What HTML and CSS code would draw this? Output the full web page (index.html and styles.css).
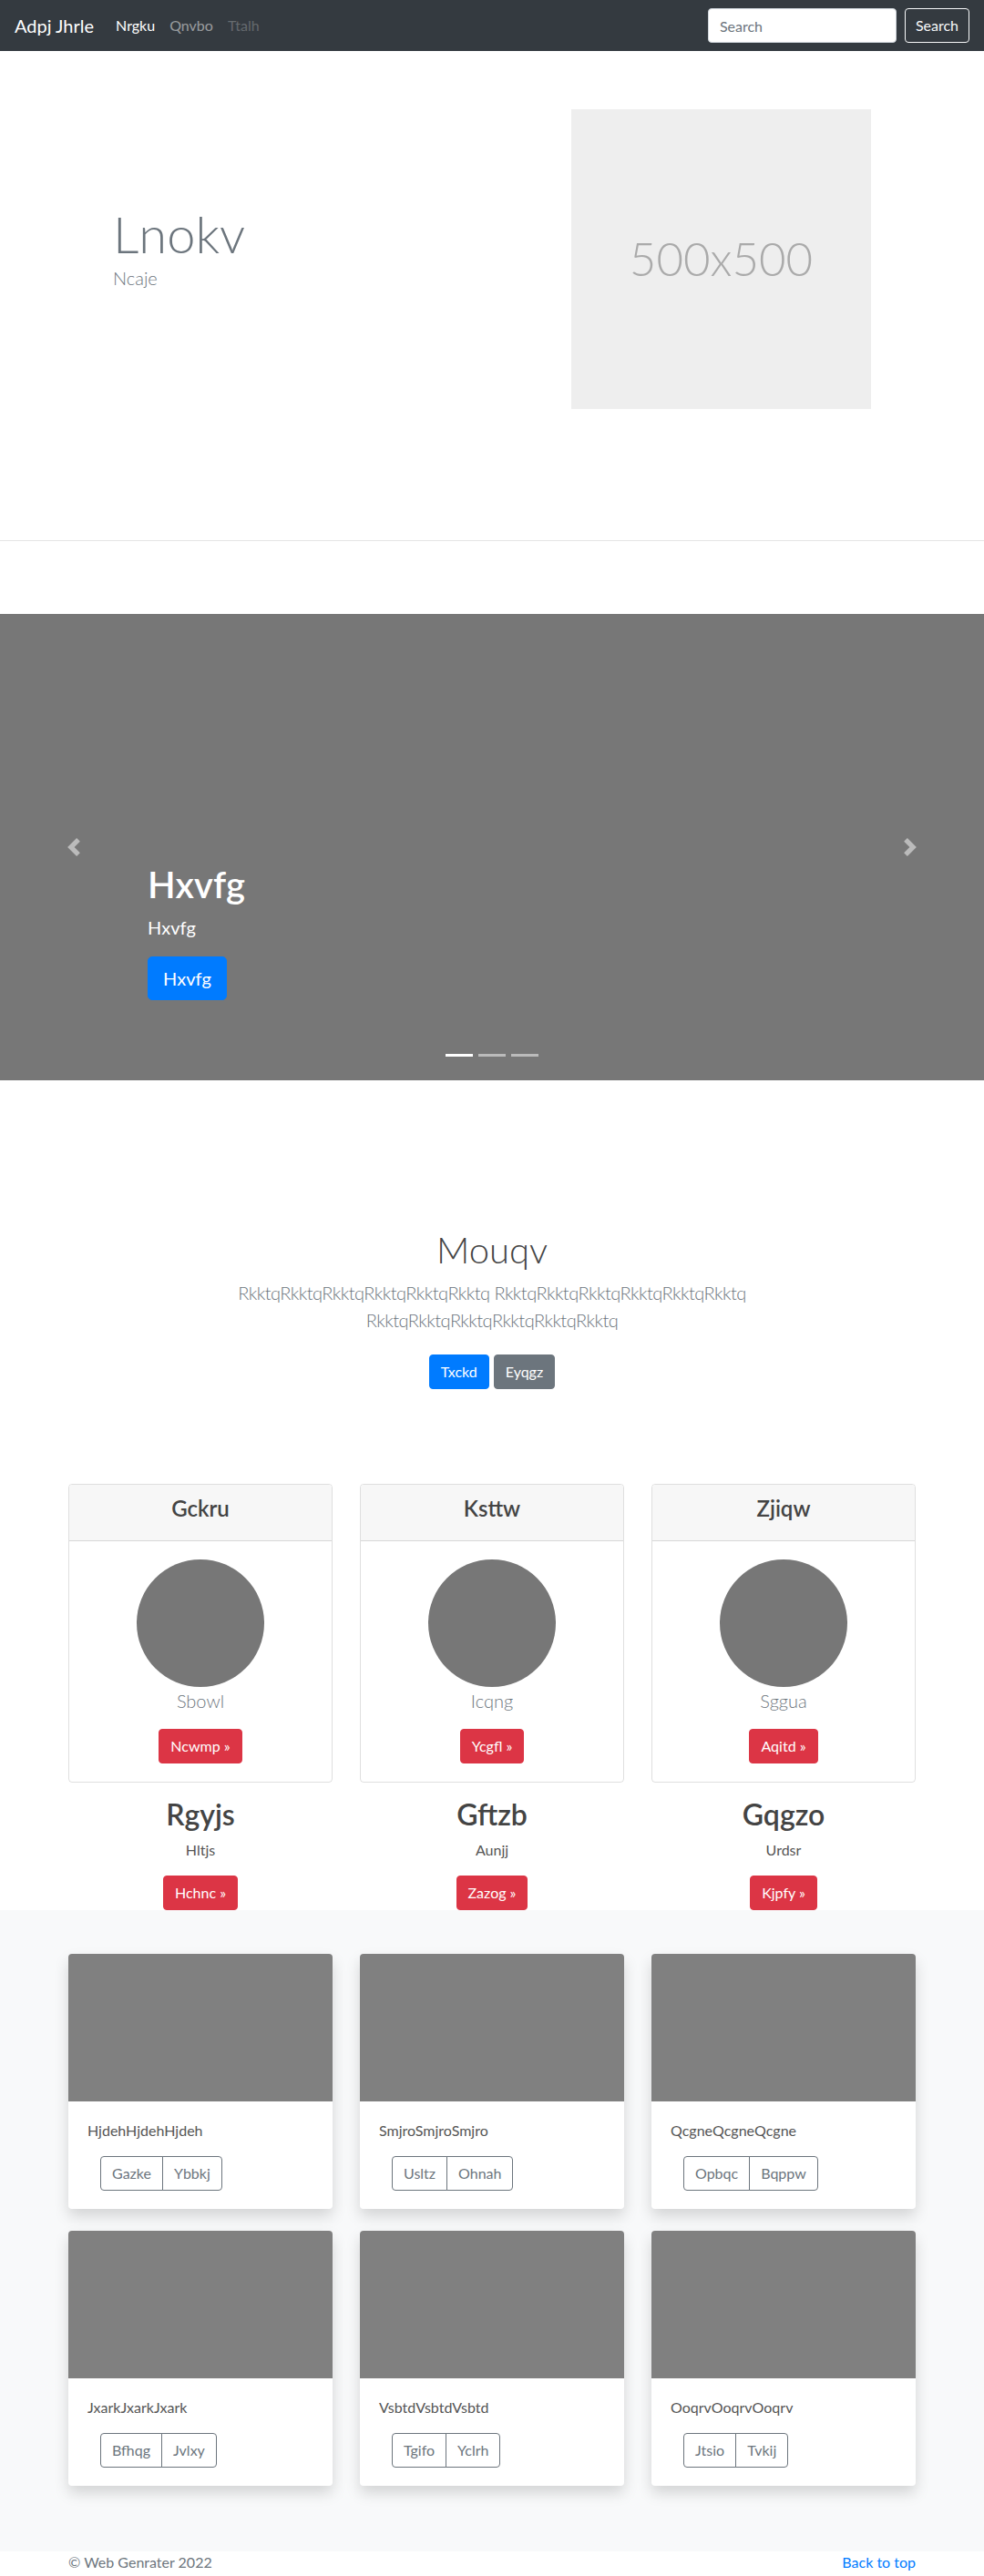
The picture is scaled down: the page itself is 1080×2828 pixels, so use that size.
FILE: index.html
```html
<!DOCTYPE html>
<html lang="en">
<head>
<meta charset="utf-8">
<title>Adpj Jhrle</title>
<link rel="stylesheet" href="styles.css">
</head>
<body>
<nav class="navbar">
  <a class="brand" href="#">Adpj Jhrle</a>
  <ul class="nav">
    <li class="active"><a href="#">Nrgku</a></li>
    <li><a href="#">Qnvbo</a></li>
    <li class="disabled"><a href="#">Ttalh</a></li>
  </ul>
  <form class="search">
    <input class="search-input" type="text" placeholder="Search">
    <button class="search-btn" type="button">Search</button>
  </form>
</nav>

<section class="hero">
  <div class="hero-text">
    <h1 class="hero-title">Lnokv</h1>
    <p class="hero-sub">Ncaje</p>
  </div>
  <div class="hero-img">500x500</div>
</section>

<div class="carousel">
  <a class="control prev" href="#">
    <svg viewBox="0 0 8 8" width="20" height="20"><path fill="#fff" d="M5.25 0l-4 4 4 4 1.5-1.5L4.25 4l2.5-2.5L5.25 0z"/></svg>
  </a>
  <div class="caption">
    <h1>Hxvfg</h1>
    <p>Hxvfg</p>
    <div class="caption-action"><a class="btn btn-lg btn-primary" href="#">Hxvfg</a></div>
  </div>
  <a class="control next" href="#">
    <svg viewBox="0 0 8 8" width="20" height="20"><path fill="#fff" d="M2.75 0l-1.5 1.5L3.75 4l-2.5 2.5L2.75 8l4-4-4-4z"/></svg>
  </a>
  <ol class="indicators">
    <li class="active"></li>
    <li></li>
    <li></li>
  </ol>
</div>

<section class="jumbo">
  <h1>Mouqv</h1>
  <p class="lead">RkktqRkktqRkktqRkktqRkktqRkktq RkktqRkktqRkktqRkktqRkktqRkktq RkktqRkktqRkktqRkktqRkktqRkktq</p>
  <div class="jumbo-actions">
    <a class="btn btn-primary" href="#">Txckd</a>
    <a class="btn btn-secondary" href="#">Eyqgz</a>
  </div>
</section>

<section class="pricing">
  <div class="price-col">
    <div class="pcard">
      <div class="pcard-header"><h4>Gckru</h4></div>
      <div class="pcard-body">
        <div class="avatar"></div>
        <p class="pcard-name">Sbowl</p>
        <a class="btn btn-danger" href="#">Ncwmp &raquo;</a>
      </div>
    </div>
    <h2 class="col-title">Rgyjs</h2>
    <p class="col-text">Hltjs</p>
    <a class="btn btn-danger" href="#">Hchnc &raquo;</a>
  </div>
  <div class="price-col">
    <div class="pcard">
      <div class="pcard-header"><h4>Ksttw</h4></div>
      <div class="pcard-body">
        <div class="avatar"></div>
        <p class="pcard-name">Icqng</p>
        <a class="btn btn-danger" href="#">Ycgfl &raquo;</a>
      </div>
    </div>
    <h2 class="col-title">Gftzb</h2>
    <p class="col-text">Aunjj</p>
    <a class="btn btn-danger" href="#">Zazog &raquo;</a>
  </div>
  <div class="price-col">
    <div class="pcard">
      <div class="pcard-header"><h4>Zjiqw</h4></div>
      <div class="pcard-body">
        <div class="avatar"></div>
        <p class="pcard-name">Sggua</p>
        <a class="btn btn-danger" href="#">Aqitd &raquo;</a>
      </div>
    </div>
    <h2 class="col-title">Gqgzo</h2>
    <p class="col-text">Urdsr</p>
    <a class="btn btn-danger" href="#">Kjpfy &raquo;</a>
  </div>
</section>

<section class="album">
  <div class="album-grid">
    <div class="acard">
      <div class="acard-img"></div>
      <div class="acard-body">
        <p class="acard-text">HjdehHjdehHjdeh</p>
        <div class="btn-group"><a class="btn btn-outline" href="#">Gazke</a><a class="btn btn-outline" href="#">Ybbkj</a></div>
      </div>
    </div>
    <div class="acard">
      <div class="acard-img"></div>
      <div class="acard-body">
        <p class="acard-text">SmjroSmjroSmjro</p>
        <div class="btn-group"><a class="btn btn-outline" href="#">Usltz</a><a class="btn btn-outline" href="#">Ohnah</a></div>
      </div>
    </div>
    <div class="acard">
      <div class="acard-img"></div>
      <div class="acard-body">
        <p class="acard-text">QcgneQcgneQcgne</p>
        <div class="btn-group"><a class="btn btn-outline" href="#">Opbqc</a><a class="btn btn-outline" href="#">Bqppw</a></div>
      </div>
    </div>
    <div class="acard">
      <div class="acard-img"></div>
      <div class="acard-body">
        <p class="acard-text">JxarkJxarkJxark</p>
        <div class="btn-group"><a class="btn btn-outline" href="#">Bfhqg</a><a class="btn btn-outline" href="#">Jvlxy</a></div>
      </div>
    </div>
    <div class="acard">
      <div class="acard-img"></div>
      <div class="acard-body">
        <p class="acard-text">VsbtdVsbtdVsbtd</p>
        <div class="btn-group"><a class="btn btn-outline" href="#">Tgifo</a><a class="btn btn-outline" href="#">Yclrh</a></div>
      </div>
    </div>
    <div class="acard">
      <div class="acard-img"></div>
      <div class="acard-body">
        <p class="acard-text">OoqrvOoqrvOoqrv</p>
        <div class="btn-group"><a class="btn btn-outline" href="#">Jtsio</a><a class="btn btn-outline" href="#">Tvkij</a></div>
      </div>
    </div>
  </div>
</section>

<footer class="footer">
  <p>&copy; Web Genrater 2022</p>
  <a href="#">Back to top</a>
</footer>
</body>
</html>
```

FILE: styles.css
```css
* {
  box-sizing: border-box;
}

body {
  margin: 0;
  font-family: Lato, "Open Sans", "Liberation Sans", sans-serif;
  font-size: 16px;
  line-height: 1.5;
  color: #555;
  background: #fff;
}

/* Navbar */
.navbar {
  display: flex;
  align-items: center;
  height: 56px;
  padding: 0 16px;
  background: #343a40;
}

.brand {
  font-size: 20px;
  line-height: 30px;
  color: #fff;
  text-decoration: none;
  margin-right: 16px;
}

.nav {
  display: flex;
  list-style: none;
  margin: 0;
  padding: 0;
}

.nav a {
  display: block;
  padding: 8px;
  color: rgba(255, 255, 255, 0.5);
  text-decoration: none;
}

.nav .active a {
  color: #fff;
}

.nav .disabled a {
  color: rgba(255, 255, 255, 0.25);
}

.search {
  margin: 0 0 0 auto;
  display: flex;
  gap: 9px;
}

.search-input {
  width: 207px;
  height: 38px;
  padding: 6px 12px;
  font-family: inherit;
  font-size: 16px;
  color: #495057;
  background: #fff;
  border: 1px solid #ced4da;
  border-radius: 4px;
}

.search-input::placeholder {
  color: #6c757d;
}

.search-btn {
  height: 38px;
  padding: 6px 11px;
  font-family: inherit;
  font-size: 16px;
  line-height: 24px;
  color: #f8f9fa;
  background: transparent;
  border: 1px solid #f8f9fa;
  border-radius: 4px;
}

/* Hero */
.hero {
  display: flex;
  align-items: flex-start;
  padding: 64px 0 144px 124px;
  border-bottom: 1px solid rgba(0, 0, 0, 0.1);
  margin-bottom: 80px;
}

.hero-text {
  width: 503px;
  margin-top: 103px;
}

.hero-title {
  font-size: 56px;
  font-weight: 300;
  line-height: 1.2;
  margin: 0;
  color: #6c757d;
}

.hero-sub {
  font-size: 20px;
  font-weight: 300;
  line-height: 30px;
  margin: 0;
  color: #6c757d;
}

.hero-img {
  width: 329px;
  height: 329px;
  background: #eee;
  color: #aaa;
  font-size: 51px;
  font-weight: 300;
  display: flex;
  align-items: center;
  justify-content: center;
}

/* Carousel */
.carousel {
  position: relative;
  height: 512px;
  background: #777;
}

.control {
  position: absolute;
  top: 0;
  bottom: 0;
  width: 15%;
  display: flex;
  align-items: center;
  justify-content: center;
  opacity: 0.5;
}

.control.prev {
  left: 0;
}

.control.next {
  right: 0;
}

.caption {
  position: absolute;
  left: 15%;
  right: 15%;
  bottom: 52px;
  padding: 20px 0;
  color: #fff;
  text-align: left;
}

.caption h1 {
  font-size: 40px;
  font-weight: 600;
  line-height: 1.2;
  margin: 0 0 8px;
}

.caption p {
  font-size: 20px;
  line-height: 30px;
  margin: 0 0 17px;
}

.caption-action {
  display: flex;
  margin-bottom: 16px;
}

.indicators {
  position: absolute;
  left: 0;
  right: 0;
  bottom: 26px;
  display: flex;
  justify-content: center;
  gap: 6px;
  list-style: none;
  margin: 0;
  padding: 0;
}

.indicators li {
  width: 30px;
  height: 3px;
  background: rgba(255, 255, 255, 0.5);
}

.indicators li.active {
  background: #fff;
}

/* Buttons */
.btn {
  display: inline-block;
  padding: 6px 12px;
  font-size: 16px;
  line-height: 24px;
  border: 1px solid transparent;
  border-radius: 4px;
  color: #fff;
  text-decoration: none;
  white-space: nowrap;
}

.btn-lg {
  padding: 8px 16px;
  font-size: 20px;
  line-height: 30px;
  border-radius: 5px;
}

.btn-primary {
  background: #007bff;
  border-color: #007bff;
}

.btn-secondary {
  background: #6c757d;
  border-color: #6c757d;
}

.btn-danger {
  background: #dc3545;
  border-color: #dc3545;
}

.btn-outline {
  color: #6c757d;
  border-color: #6c757d;
  background: transparent;
}

/* Jumbo */
.jumbo {
  text-align: center;
  padding-top: 162px;
}

.jumbo h1 {
  font-size: 40px;
  font-weight: 300;
  line-height: 1.2;
  margin: 0 0 8px;
  color: #444;
}

.lead {
  max-width: 610px;
  margin: 0 auto;
  font-size: 20px;
  font-weight: 300;
  line-height: 30px;
  letter-spacing: -0.55px;
  color: #6c757d;
}

.jumbo-actions {
  display: flex;
  justify-content: center;
  gap: 5px;
  margin-top: 23px;
}

/* Pricing */
.pricing {
  width: 930px;
  margin: 104px auto 0;
  display: grid;
  grid-template-columns: repeat(3, 290px);
  column-gap: 30px;
  text-align: center;
}

.pcard {
  border: 1px solid rgba(0, 0, 0, 0.125);
  border-radius: 4px;
  margin-bottom: 16px;
  overflow: hidden;
}

.pcard-header {
  background: #f7f7f7;
  padding: 12px 20px;
  border-bottom: 1px solid rgba(0, 0, 0, 0.125);
}

.pcard-header h4 {
  font-size: 24px;
  font-weight: 600;
  line-height: 1.2;
  margin: 0 0 8px;
  color: #444;
}

.pcard-body {
  padding: 20px;
}

.avatar {
  width: 140px;
  height: 140px;
  border-radius: 50%;
  background: #777;
  margin: 0 auto;
}

.pcard-name {
  font-size: 20px;
  font-weight: 300;
  line-height: 30px;
  margin: 0 0 16px;
  color: #6c757d;
}

.col-title {
  font-size: 32px;
  font-weight: 600;
  line-height: 1.2;
  margin: 0 0 8px;
  color: #444;
}

.col-text {
  margin: 0 0 16px;
}

/* Album */
.album {
  background: #f8f9fa;
  padding: 48px 0 72px;
}

.album-grid {
  width: 930px;
  margin: 0 auto;
  display: grid;
  grid-template-columns: repeat(3, 290px);
  column-gap: 30px;
  row-gap: 24px;
}

.acard {
  background: #fff;
  border-radius: 4px;
  overflow: hidden;
  box-shadow: 0 8px 16px rgba(0, 0, 0, 0.15);
}

.acard-img {
  height: 162px;
  background: #808080;
}

.acard-body {
  padding: 20px 21px;
}

.acard-text {
  margin: 0 0 16px;
}

.btn-group {
  display: inline-flex;
  margin-left: 14px;
}

.btn-group .btn:first-child {
  border-radius: 4px 0 0 4px;
}

.btn-group .btn:last-child {
  margin-left: -1px;
  border-radius: 0 4px 4px 0;
}

/* Footer */
.footer {
  width: 930px;
  margin: 0 auto;
  display: flex;
  justify-content: space-between;
  padding: 0 0 48px;
  color: #6c757d;
}

.footer p {
  margin: 0;
}

.footer a {
  color: #007bff;
  text-decoration: none;
}
```
